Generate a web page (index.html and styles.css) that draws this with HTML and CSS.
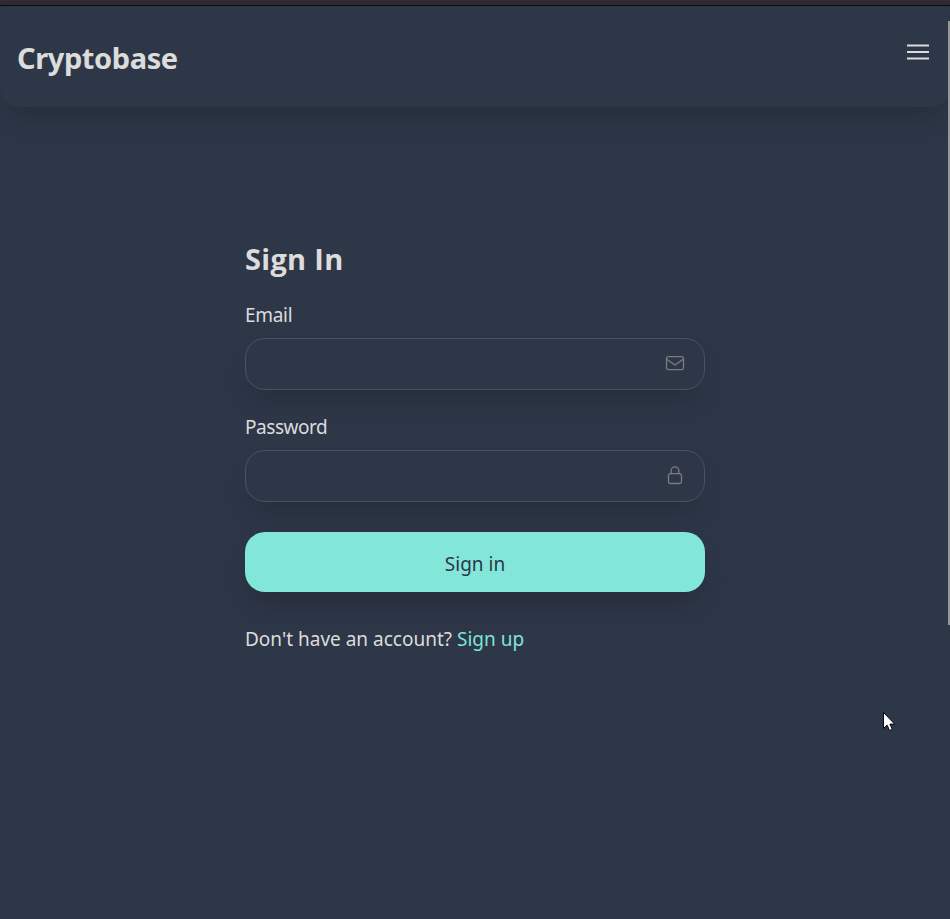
FILE: index.html
```
<!DOCTYPE html>
<html lang="en">
<head>
<meta charset="utf-8">
<title>Cryptobase</title>
<link rel="stylesheet" href="styles.css">
</head>
<body>
<div class="window-edge"></div>
<header class="navbar">
  <h1 class="brand">Cryptobase</h1>
  <button class="menu" aria-label="Menu">
    <svg width="24" height="18" viewBox="0 0 24 18" fill="none" stroke="currentColor" stroke-width="1.9"><path d="M1 2.5h22M1 9h22M1 15.5h22"/></svg>
  </button>
</header>
<main class="signin">
  <h2 class="title">Sign In</h2>
  <form>
    <label class="label label-email" for="email">Email</label>
    <div class="field">
      <input id="email" type="email">
      <svg class="icon" width="20" height="20" viewBox="0 0 20 20" fill="none" stroke="currentColor" stroke-width="1.3" stroke-linejoin="round"><rect x="1.5" y="3.6" width="17" height="13" rx="1.8"/><path d="M1.7 6.2 10 12l8.3-5.8"/></svg>
    </div>
    <label class="label label-password" for="password">Password</label>
    <div class="field">
      <input id="password" type="password">
      <svg class="icon" width="20" height="20" viewBox="0 0 20 20" fill="none" stroke="currentColor" stroke-width="1.3" stroke-linecap="round"><rect x="3.5" y="8.7" width="13" height="9.8" rx="1.8"/><path d="M6.2 8.7V5.6a3.8 3.8 0 0 1 7.6 0v3.1"/></svg>
    </div>
    <button class="submit" type="button"><span>Sign in</span></button>
  </form>
  <p class="signup"><span class="question">Don't have an account?</span> <a>Sign up</a></p>
</main>
<div class="scrollbar"></div>
<svg class="cursor" width="14" height="21" viewBox="0 0 14 21"><path d="M.5.5v16l3.6-3.4 2.5 5.4 2.7-1.2-2.4-5.2h4.8z" fill="#fff" stroke="#05070d"/></svg>
</body>
</html>
```
FILE: styles.css
```
* { box-sizing: border-box; }
html, body { height: 100%; }
body {
  margin: 0;
  overflow: hidden;
  background: #2e3748;
  color: #dcdcdc;
  font-family: "Segoe UI", "Noto Sans", sans-serif;
  font-size: 19px;
}
h1, h2, p { margin: 0; }
button { font: inherit; border: 0; padding: 0; }
.window-edge {
  height: 6px;
  background: #2e2b35;
  border-bottom: 1px solid #0b0b12;
}
.navbar {
  display: flex;
  justify-content: space-between;
  align-items: flex-start;
  height: 101px;
  padding: 32px 20px 0 17px;
  border-radius: 20px;
  box-shadow: 0 15px 30px -5px rgba(0, 0, 0, .17);
}
.brand { font-size: 29px; line-height: 40px; font-weight: 700; letter-spacing: -.4px; }
.menu { display: flex; margin-top: 5px; background: none; color: #dcdcdc; }
.signin { width: 460px; margin: 132px auto 0; }
.title { font-family: "Segoe UI", "Open Sans", sans-serif; font-size: 29px; line-height: 40px; font-weight: 700; letter-spacing: .3px; }
.label { display: block; line-height: 28px; }
.label-email { margin: 22px 0 9px; letter-spacing: -.3px; }
.label-password { margin: 23px 0 9px; letter-spacing: -.45px; }
.field {
  display: flex;
  align-items: center;
  height: 52px;
  padding-right: 19px;
  border: 1px solid #495262;
  border-radius: 20px;
  box-shadow: 0 15px 30px -5px rgba(0, 0, 0, .17);
}
.field input { flex: 1; height: 100%; border: 0; outline: 0; background: transparent; color: inherit; font: inherit; }
.icon { color: #7c7c7e; margin-bottom: 2px; }
.submit {
  display: block;
  width: 100%;
  height: 60px;
  margin-top: 30px;
  padding-top: 3px;
  border-radius: 20px;
  background: #82e6d9;
  color: #2d3748;
  box-shadow: 0 15px 30px -5px rgba(0, 0, 0, .2);
}
.signup { margin-top: 33px; line-height: 28px; white-space: nowrap; }
.signup a { color: #7de5d6; }
.scrollbar { position: absolute; right: 0; top: 21px; width: 2px; height: 604px; background: #989898; }
.cursor { position: absolute; left: 883px; top: 712px; }
```
